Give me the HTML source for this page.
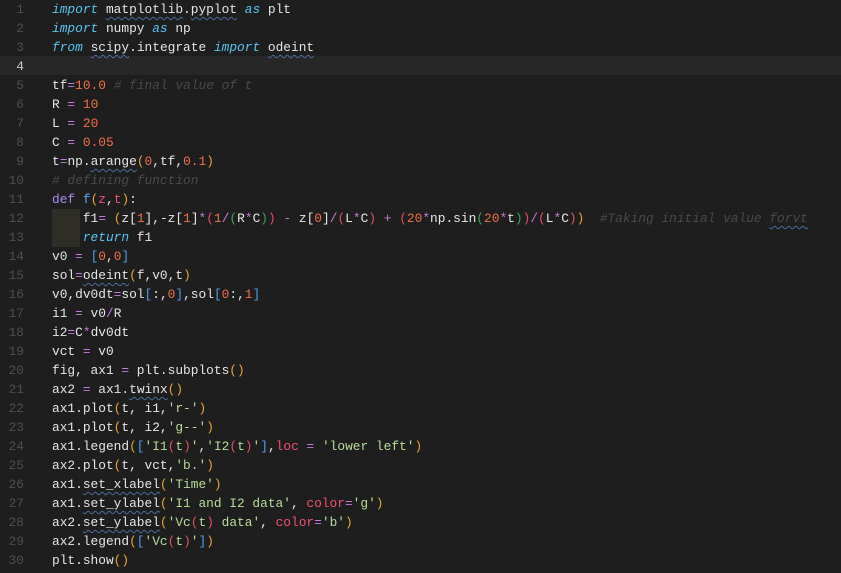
<!DOCTYPE html>
<html><head><meta charset="utf-8"><style>
html,body{margin:0;padding:0;background:#1e1e1e;width:841px;height:573px;overflow:hidden}
.ed{position:relative;font-family:"Liberation Mono",monospace;font-size:12.85px;color:#e6e6e6}
.l{position:absolute;left:0;width:841px;height:19px;line-height:19px;white-space:pre}
.ln{position:absolute;left:0;width:24px;text-align:right;color:#4e4e4e}
.t{position:absolute;left:52px}
.hl{background:#272727}
.k{color:#58c3f0;font-style:italic}
.o{color:#c57be0}
.n{color:#f26f4a}
.s{color:#b8dc9a}
.c{color:#4a4a4a;font-style:italic}
.b1{color:#e3a43a}.b2{color:#4b9fe8}.b3{color:#e44e66}.bg{color:#3aa35c}
.p{color:#f0506e}.d{color:#a88af0}.fn{color:#5aa8f5}
.w{text-decoration:underline wavy #4a6c9c;text-underline-offset:3px;text-decoration-thickness:1px}
.ig{position:absolute;left:52px;top:209px;width:28px;height:38px;background:#2e2e26}
</style></head><body><div class="ed">
<div class="l hl" style="top:56px"></div>
<div class="ig"></div>
<div class="l" style="top:0"><span class="ln">1</span><span class="t"><span class="k">import</span> <span class="w">matplotlib</span>.<span class="w">pyplot</span> <span class="k">as</span> plt</span></div>
<div class="l" style="top:19px"><span class="ln">2</span><span class="t"><span class="k">import</span> numpy <span class="k">as</span> np</span></div>
<div class="l" style="top:38px"><span class="ln">3</span><span class="t"><span class="k">from</span> <span class="w">scipy</span>.integrate <span class="k">import</span> <span class="w">odeint</span></span></div>
<div class="l" style="top:57px"><span class="ln" style="color:#c8c8c8">4</span><span class="t"></span></div>
<div class="l" style="top:76px"><span class="ln">5</span><span class="t">tf<span class="o">=</span><span class="n">10.0</span> <span class="c"># final value of t</span></span></div>
<div class="l" style="top:95px"><span class="ln">6</span><span class="t">R <span class="o">=</span> <span class="n">10</span></span></div>
<div class="l" style="top:114px"><span class="ln">7</span><span class="t">L <span class="o">=</span> <span class="n">20</span></span></div>
<div class="l" style="top:133px"><span class="ln">8</span><span class="t">C <span class="o">=</span> <span class="n">0.05</span></span></div>
<div class="l" style="top:152px"><span class="ln">9</span><span class="t">t<span class="o">=</span>np.<span class="w">arange</span><span class="b1">(</span><span class="n">0</span>,tf,<span class="n">0.1</span><span class="b1">)</span></span></div>
<div class="l" style="top:171px"><span class="ln">10</span><span class="t"><span class="c"># defining function</span></span></div>
<div class="l" style="top:190px"><span class="ln">11</span><span class="t"><span class="d">def</span> <span class="fn">f</span><span class="b1">(</span><span class="p">z</span>,<span class="p">t</span><span class="b1">)</span>:</span></div>
<div class="l" style="top:209px"><span class="ln">12</span><span class="t">    f1<span class="o">=</span> <span class="b1">(</span>z[<span class="n">1</span>],-z[<span class="n">1</span>]<span class="o">*</span><span class="b3">(</span><span class="n">1</span><span class="o">/</span><span class="bg">(</span>R<span class="o">*</span>C<span class="bg">)</span><span class="b3">)</span> <span class="o">-</span> z[<span class="n">0</span>]<span class="o">/</span><span class="b3">(</span>L<span class="o">*</span>C<span class="b3">)</span> <span class="o">+</span> <span class="b3">(</span><span class="n">20</span><span class="o">*</span>np.sin<span class="bg">(</span><span class="n">20</span><span class="o">*</span>t<span class="bg">)</span><span class="b3">)</span><span class="o">/</span><span class="b3">(</span>L<span class="o">*</span>C<span class="b3">)</span><span class="b1">)</span>  <span class="c">#Taking initial value <span class="w">forvt</span></span></span></div>
<div class="l" style="top:228px"><span class="ln">13</span><span class="t">    <span class="k">return</span> f1</span></div>
<div class="l" style="top:247px"><span class="ln">14</span><span class="t">v0 <span class="o">=</span> <span class="b2">[</span><span class="n">0</span>,<span class="n">0</span><span class="b2">]</span></span></div>
<div class="l" style="top:266px"><span class="ln">15</span><span class="t">sol<span class="o">=</span><span class="w">odeint</span><span class="b1">(</span>f,v0,t<span class="b1">)</span></span></div>
<div class="l" style="top:285px"><span class="ln">16</span><span class="t">v0,dv0dt<span class="o">=</span>sol<span class="b2">[</span>:,<span class="n">0</span><span class="b2">]</span>,sol<span class="b2">[</span><span class="n">0</span>:,<span class="n">1</span><span class="b2">]</span></span></div>
<div class="l" style="top:304px"><span class="ln">17</span><span class="t">i1 <span class="o">=</span> v0<span class="o">/</span>R</span></div>
<div class="l" style="top:323px"><span class="ln">18</span><span class="t">i2<span class="o">=</span>C<span class="o">*</span>dv0dt</span></div>
<div class="l" style="top:342px"><span class="ln">19</span><span class="t">vct <span class="o">=</span> v0</span></div>
<div class="l" style="top:361px"><span class="ln">20</span><span class="t">fig, ax1 <span class="o">=</span> plt.subplots<span class="b1">()</span></span></div>
<div class="l" style="top:380px"><span class="ln">21</span><span class="t">ax2 <span class="o">=</span> ax1.<span class="w">twinx</span><span class="b1">()</span></span></div>
<div class="l" style="top:399px"><span class="ln">22</span><span class="t">ax1.plot<span class="b1">(</span>t, i1,<span class="s">'r-'</span><span class="b1">)</span></span></div>
<div class="l" style="top:418px"><span class="ln">23</span><span class="t">ax1.plot<span class="b1">(</span>t, i2,<span class="s">'g--'</span><span class="b1">)</span></span></div>
<div class="l" style="top:437px"><span class="ln">24</span><span class="t">ax1.legend<span class="b1">(</span><span class="b2">[</span><span class="s">'I1<span class="b3">(</span>t<span class="b3">)</span>'</span>,<span class="s">'I2<span class="b3">(</span>t<span class="b3">)</span>'</span><span class="b2">]</span>,<span class="p">loc</span> <span class="o">=</span> <span class="s">'lower left'</span><span class="b1">)</span></span></div>
<div class="l" style="top:456px"><span class="ln">25</span><span class="t">ax2.plot<span class="b1">(</span>t, vct,<span class="s">'b.'</span><span class="b1">)</span></span></div>
<div class="l" style="top:475px"><span class="ln">26</span><span class="t">ax1.<span class="w">set_xlabel</span><span class="b1">(</span><span class="s">'Time'</span><span class="b1">)</span></span></div>
<div class="l" style="top:494px"><span class="ln">27</span><span class="t">ax1.<span class="w">set_ylabel</span><span class="b1">(</span><span class="s">'I1 and I2 data'</span>, <span class="p">color</span><span class="o">=</span><span class="s">'g'</span><span class="b1">)</span></span></div>
<div class="l" style="top:513px"><span class="ln">28</span><span class="t">ax2.<span class="w">set_ylabel</span><span class="b1">(</span><span class="s">'Vc<span class="b3">(</span>t<span class="b3">)</span> data'</span>, <span class="p">color</span><span class="o">=</span><span class="s">'b'</span><span class="b1">)</span></span></div>
<div class="l" style="top:532px"><span class="ln">29</span><span class="t">ax2.legend<span class="b1">(</span><span class="b2">[</span><span class="s">'Vc<span class="b3">(</span>t<span class="b3">)</span>'</span><span class="b2">]</span><span class="b1">)</span></span></div>
<div class="l" style="top:551px"><span class="ln">30</span><span class="t">plt.show<span class="b1">()</span></span></div>
</div></body></html>
